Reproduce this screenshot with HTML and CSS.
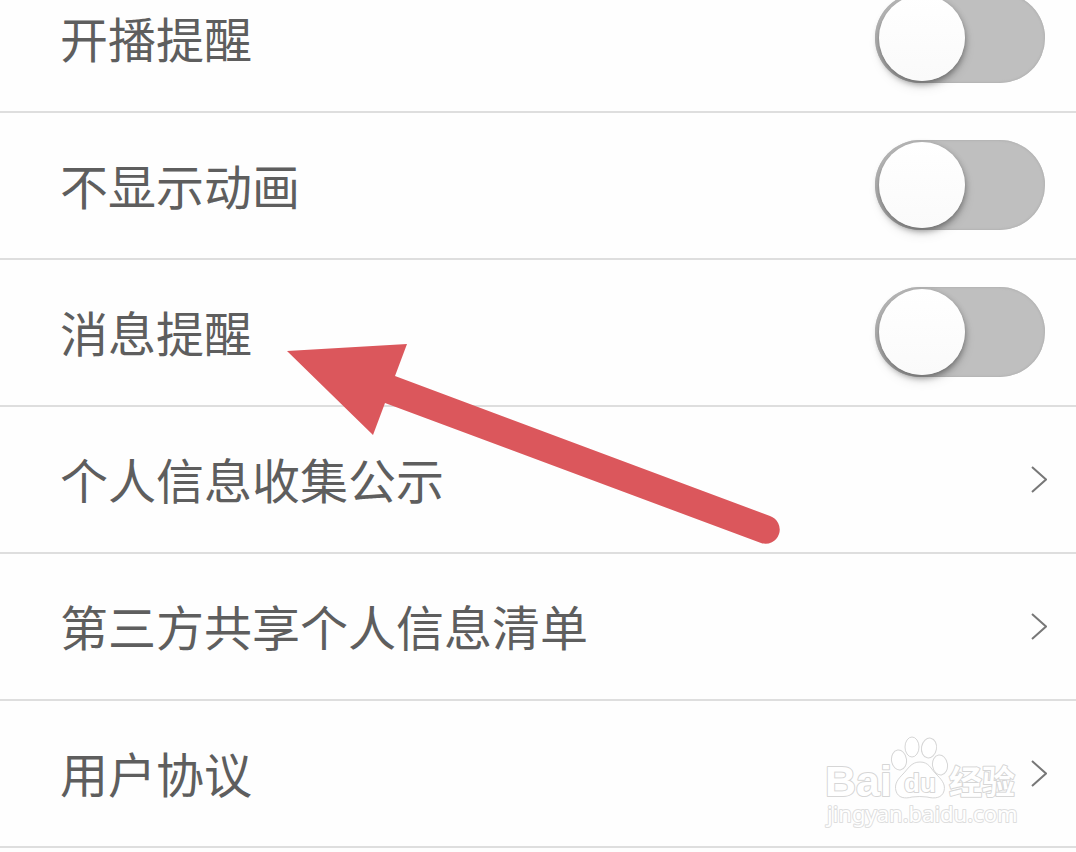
FILE: index.html
```html
<!DOCTYPE html>
<html lang="zh-CN">
<head>
<meta charset="utf-8">
<meta name="viewport" content="width=device-width, initial-scale=1">
<title>设置</title>
<link rel="stylesheet" href="styles.css">
</head>
<body>
<main class="screen">
  <ul class="settings">
    <li class="row"><label class="label" for="live">开播提醒</label><input class="switch" id="live" type="checkbox" role="switch"></li>
    <li class="row"><label class="label" for="anim">不显示动画</label><input class="switch" id="anim" type="checkbox" role="switch"></li>
    <li class="row"><label class="label" for="msg">消息提醒</label><input class="switch" id="msg" type="checkbox" role="switch"></li>
    <li class="row"><a class="link" href="#collect"><span class="label">个人信息收集公示</span><svg class="chevron" viewBox="0 0 16 28" aria-hidden="true"><path d="M1 2L15 14.500L1 27"/></svg></a></li>
    <li class="row"><a class="link" href="#share"><span class="label">第三方共享个人信息清单</span><svg class="chevron" viewBox="0 0 16 28" aria-hidden="true"><path d="M1 2L15 14.500L1 27"/></svg></a></li>
    <li class="row"><a class="link" href="#terms"><span class="label">用户协议</span><svg class="chevron" viewBox="0 0 16 28" aria-hidden="true"><path d="M1 2L15 14.500L1 27"/></svg></a></li>
  </ul>

  <svg class="arrow" viewBox="0 0 494 202" aria-hidden="true">
    <path d="M1 8L121 1L109 33L484 173A14 14 0 0 1 475 200L99 60L87 92Z"/>
  </svg>

  <svg class="watermark" viewBox="0 0 200 100" role="img" aria-label="Baidu 经验 jingyan.baidu.com">
    <text class="brand" x="1" y="61">Bai</text>
    <g class="paw">
      <ellipse cx="75" cy="25" rx="7.500" ry="10" transform="rotate(-8 75 25)"/>
      <ellipse cx="88" cy="12" rx="7" ry="10"/>
      <ellipse cx="105" cy="13" rx="7.500" ry="10" transform="rotate(10 105 13)"/>
      <ellipse cx="116" cy="30" rx="7.500" ry="10" transform="rotate(-8 116 30)"/>
      <path d="M96 27C87 27 84 34 79 39C74 44 70 49 72 56C74 63 81 64 88 62Q96 61 103 62C111 64 118 63 120 56C122 49 117 44 112 39C107 34 105 27 96 27Z"/>
    </g>
    <text class="du" x="80" y="57">du</text>
    <text class="topic" x="125" y="59">经验</text>
    <text class="site" x="3" y="87">jingyan.baidu.com</text>
  </svg>
</main>
</body>
</html>
```

FILE: styles.css
```css
* { box-sizing: border-box; }

body {
  margin: 0;
  background: #fefefe;
  color: #5e5e5e;
  font-family: "Noto Sans CJK SC", sans-serif;
}

.screen {
  position: relative;
  min-height: 100vh;
  overflow: hidden;
}

/* The list is scrolled slightly past its first row's top edge. */
.settings {
  list-style: none;
  margin: -34px 0 0;
  padding: 0;
}

.row {
  display: flex;
  align-items: center;
  justify-content: space-between;
  min-height: 147px;
  padding: 0 29px 2px 60px;
  border-bottom: 2px solid #dedede;
}

.link {
  flex: 1;
  display: flex;
  align-items: center;
  justify-content: space-between;
  color: inherit;
  text-decoration: none;
}

.label {
  padding-bottom: 2px;
  font-size: 48px;
  line-height: 72px;
}

.switch {
  appearance: none;
  flex: none;
  width: 170px;
  height: 90px;
  margin: 0 2px 0 0;
  padding: 2px 4px;
  border-radius: 45px;
  background: #bfbfbf;
  box-shadow: inset 0 0 2px 1px #b3b3b3;
}

.switch::before {
  content: "";
  display: block;
  width: 86px;
  height: 86px;
  border-radius: 50%;
  background: linear-gradient(#ffffff, #fafafa);
  box-shadow: 0 3px 6px rgba(0, 0, 0, 0.4), 0 6px 12px rgba(0, 0, 0, 0.1);
}

.switch:checked::before { margin-left: auto; }

.chevron {
  flex: none;
  width: 16px;
  height: 28px;
  fill: none;
  stroke: #777777;
  stroke-width: 2;
}

.arrow {
  position: absolute;
  left: 286px;
  top: 343px;
  width: 494px;
  height: 202px;
  fill: #db575c;
  pointer-events: none;
}

.watermark {
  position: absolute;
  right: 52px;
  top: 735px;
  width: 200px;
  height: 100px;
  overflow: visible;
  fill: #ffffff;
  stroke: #d6d6d6;
  stroke-width: 1;
  pointer-events: none;
}

.watermark text {
  paint-order: stroke;
  stroke-width: 2;
  stroke-linejoin: round;
}

.brand {
  font: bold 43px "Liberation Sans", sans-serif;
}

.du {
  font: bold 26px "Liberation Sans", sans-serif;
}

.topic {
  font: bold 33px "Noto Sans CJK SC", sans-serif;
}

.site {
  font: 22px "Noto Sans", sans-serif;
  stroke: #dedede;
}
```
